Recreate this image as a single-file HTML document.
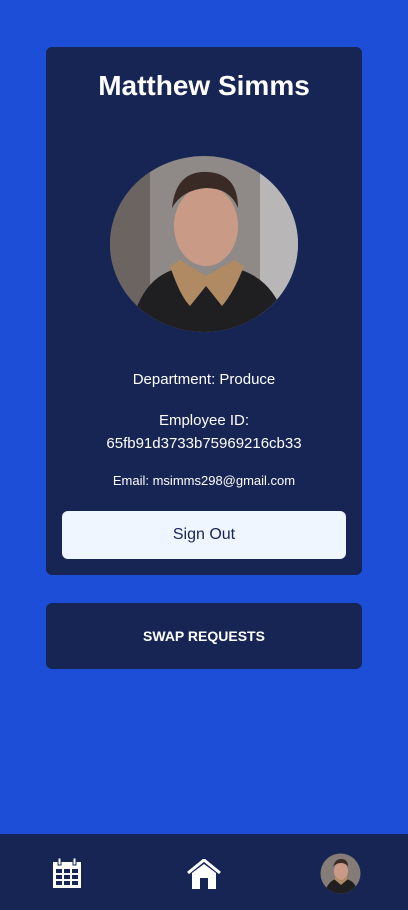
<!DOCTYPE html>
<html><head><style>
*{margin:0;padding:0;box-sizing:border-box}
body{width:408px;height:910px;background:#1d4ed8;font-family:"Liberation Sans",sans-serif;position:relative;overflow:hidden;color:#fff}
.card{position:absolute;left:46px;top:47px;width:316px;height:528px;background:#172554;border-radius:6px;text-align:center}
h1{position:absolute;top:23px;width:100%;font-size:28px;font-weight:bold}
.t{position:absolute;width:100%;font-size:15px}
.btn{position:absolute;left:16px;top:464px;width:284px;height:48px;background:#eff6ff;border-radius:6px;color:#172554;font-size:16px;line-height:48px}
.swap{position:absolute;left:46px;top:603px;width:316px;height:66px;background:#172554;border-radius:6px;text-align:center;line-height:66px;font-weight:bold;font-size:14px}
.nav{position:absolute;left:0;top:834px;width:408px;height:76px;background:#172554}
</style></head><body>
<div class="card">
<h1>Matthew Simms</h1>
<svg style="position:absolute;left:64px;top:109px" width="188" height="176" viewBox="0 0 188 176">
<defs><clipPath id="c"><ellipse cx="94" cy="88" rx="94" ry="88"/></clipPath></defs>
<g clip-path="url(#c)">
<rect width="188" height="176" fill="#8f8a88"/>
<rect x="0" y="0" width="40" height="176" fill="#6b6461"/>
<rect x="150" y="0" width="38" height="176" fill="#b9b6b8"/>
<ellipse cx="96" cy="70" rx="32" ry="40" fill="#c99a86"/>
<path d="M62 52 Q66 14 98 16 Q128 18 128 52 Q120 32 96 32 Q72 34 62 52Z" fill="#3a2a25"/>
<path d="M20 176 Q30 120 70 112 L96 130 L124 112 Q168 122 178 176Z" fill="#1f1f22"/>
<path d="M60 110 Q70 140 80 150 L96 130 L112 150 Q124 136 134 110 L124 104 L96 120 L70 104Z" fill="#b08a63"/>
</g></svg>
<div class="t" style="top:324px">Department: Produce</div>
<div class="t" style="top:365px">Employee ID:</div>
<div class="t" style="top:388px">65fb91d3733b75969216cb33</div>
<div class="t" style="top:426px;font-size:13px">Email: msimms298@gmail.com</div>
<div class="btn">Sign Out</div>
</div>
<div class="swap">SWAP REQUESTS</div>
<div class="nav">
<svg style="position:absolute;left:52px;top:24px" width="30" height="30" viewBox="0 0 30 30">
<rect x="1" y="4" width="28" height="26" fill="#fff"/>
<rect x="6" y="0" width="3" height="7" fill="#fff" stroke="#172554" stroke-width="1"/>
<rect x="21" y="0" width="3" height="7" fill="#fff" stroke="#172554" stroke-width="1"/>
<g fill="#172554">
<rect x="4" y="11" width="6" height="4"/><rect x="12" y="11" width="6" height="4"/><rect x="20" y="11" width="6" height="4"/>
<rect x="4" y="17" width="6" height="4"/><rect x="12" y="17" width="6" height="4"/><rect x="20" y="17" width="6" height="4"/>
<rect x="4" y="23" width="6" height="4"/><rect x="12" y="23" width="6" height="4"/><rect x="20" y="23" width="6" height="4"/>
</g></svg>
<svg style="position:absolute;left:186px;top:25px" width="36" height="30" viewBox="0 0 36 30">
<path d="M2 14 L18 1 L34 14" fill="none" stroke="#fff" stroke-width="3"/>
<path d="M6 14 L18 5 L30 14 V30 H22 V19 H14 V30 H6Z" fill="#fff"/>
</svg>
<svg style="position:absolute;left:320px;top:19px" width="41" height="41" viewBox="0 0 41 41">
<defs><clipPath id="d"><circle cx="20.5" cy="20.5" r="20"/></clipPath></defs>
<g clip-path="url(#d)"><rect width="41" height="41" fill="#857c78"/>
<ellipse cx="21" cy="18" rx="7" ry="9" fill="#c99a86"/>
<path d="M13 14 Q15 6 21 6 Q28 6 28 14 Q26 10 21 10 Q16 10 13 14Z" fill="#3a2a25"/>
<path d="M4 41 Q8 28 16 26 L21 30 L26 26 Q36 28 38 41Z" fill="#1f1f22"/>
<path d="M14 26 L21 32 L28 26 L26 24 L21 28 L16 24Z" fill="#b08a63"/></g></svg>
</div>
</body></html>
